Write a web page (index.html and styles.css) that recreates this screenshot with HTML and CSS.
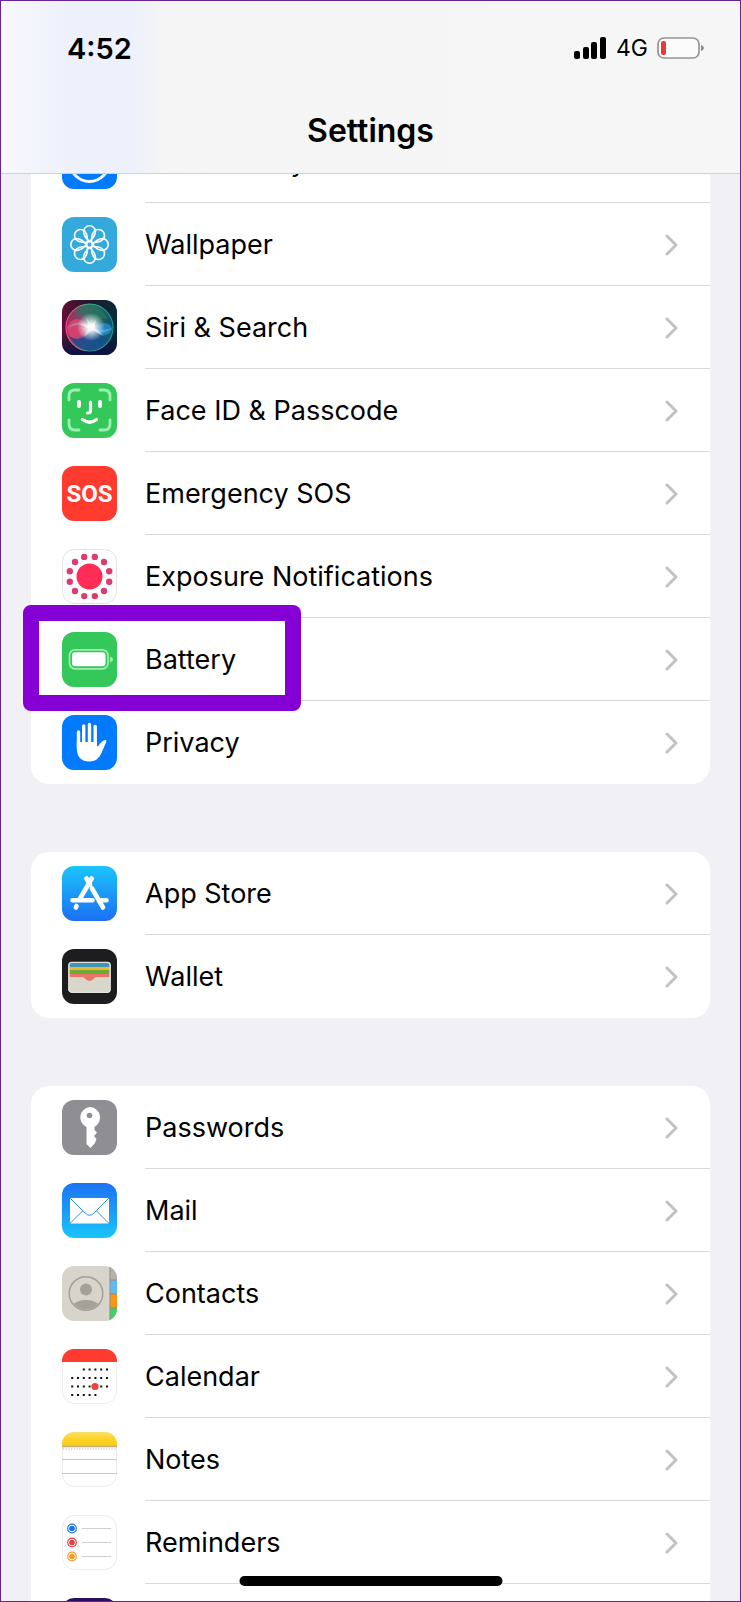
FILE: index.html
```
<!DOCTYPE html>
<html lang="en">
<head>
  <meta charset="UTF-8" />
  <meta name="viewport" content="width=device-width, initial-scale=1.0"/>
  <title>Settings</title>
  <link rel="stylesheet" href="styles.css">
</head>
<body>
  <svg class="defs" aria-hidden="true">
    <symbol id="chevron" viewBox="0 0 14 22">
      <path d="M2 2l9 9-9 9" fill="none" stroke="#c2c2c5" stroke-width="3" stroke-linecap="round" stroke-linejoin="round"/>
    </symbol>
  </svg>

  <div class="screen">
    <header class="header">
      <div class="status-bar">
        <span class="time">4:52</span>
        <div class="status-icons">
          <svg width="34" height="22" viewBox="0 0 34 22" aria-hidden="true">
            <rect x="1" y="14" width="6" height="8" rx="2"/>
            <rect x="10" y="10" width="6" height="12" rx="2"/>
            <rect x="18" y="5" width="6" height="17" rx="2"/>
            <rect x="27" y="0" width="6" height="22" rx="2"/>
          </svg>
          <span class="network">4G</span>
          <svg width="48" height="22" viewBox="0 0 48 22" aria-hidden="true">
            <rect x="1" y="1" width="41" height="20" rx="6" fill="#fbfbfb" stroke="#949694" stroke-width="1.7"/>
            <rect x="4" y="4" width="5" height="14" rx="2" fill="#e8393c"/>
            <path d="M44 8q3 .8 3 3t-3 3z" fill="#8b8b8b"/>
          </svg>
        </div>
      </div>
      <h1 class="title">Settings</h1>
    </header>

    <main class="content">
      <nav class="group">
        <a class="row" href="#">
          <svg class="icon" viewBox="0 0 55 55"><rect width="55" height="55" rx="12" fill="#007aff"/><circle cx="27.5" cy="28" r="19.5" fill="none" stroke="#fff" stroke-width="3"/></svg>
          <span class="label">Accessibility</span>
          <svg class="chevron"><use href="#chevron"/></svg>
        </a>
        <a class="row" href="#">
          <svg class="icon" viewBox="0 0 55 55">
            <rect width="55" height="55" rx="12" fill="#34aadc"/>
            <g fill="none" stroke="#fff" stroke-width="1.6">
              <circle cx="27.5" cy="27.5" r="3"/>
              <path id="petal" d="M27.500 24.500C23.500 21 21.600 17.500 21.600 14.500A5.900 5.700 0 0 1 33.400 14.500C33.400 17.500 31.500 21 27.500 24.500Z"/>
              <use href="#petal" transform="rotate(45 27.500 27.500)"/>
              <use href="#petal" transform="rotate(90 27.500 27.500)"/>
              <use href="#petal" transform="rotate(135 27.500 27.500)"/>
              <use href="#petal" transform="rotate(180 27.500 27.500)"/>
              <use href="#petal" transform="rotate(225 27.500 27.500)"/>
              <use href="#petal" transform="rotate(270 27.500 27.500)"/>
              <use href="#petal" transform="rotate(315 27.500 27.500)"/>
            </g>
          </svg>
          <span class="label">Wallpaper</span>
          <svg class="chevron"><use href="#chevron"/></svg>
        </a>
        <a class="row" href="#">
          <svg class="icon" viewBox="0 0 55 55">
            <defs>
              <linearGradient id="siriBg"><stop offset="0" stop-color="#641035"/><stop offset=".45" stop-color="#25152f"/><stop offset="1" stop-color="#062d35"/></linearGradient>
              <linearGradient id="siriShade" x2="0" y2="1"><stop offset=".55" stop-color="#10133f" stop-opacity="0"/><stop offset="1" stop-color="#0c1048"/></linearGradient>
              <linearGradient id="siriOrb"><stop offset="0" stop-color="#a52a58"/><stop offset=".4" stop-color="#66576f"/><stop offset=".65" stop-color="#216b69"/><stop offset="1" stop-color="#0d5263"/></linearGradient>
              <linearGradient id="siriRing"><stop offset="0" stop-color="#ef4c7f"/><stop offset=".5" stop-color="#35b487"/><stop offset="1" stop-color="#168f9d"/></linearGradient>
              <radialGradient id="siriGlow"><stop offset="0" stop-color="#fff"/><stop offset=".25" stop-color="#fff" stop-opacity=".9"/><stop offset="1" stop-color="#fff" stop-opacity="0"/></radialGradient>
            </defs>
            <rect width="55" height="55" rx="12" fill="url(#siriBg)"/>
            <rect width="55" height="55" rx="12" fill="url(#siriShade)"/>
            <circle cx="27.5" cy="27.500" r="23.500" fill="url(#siriOrb)" stroke="url(#siriRing)" stroke-width="1.200"/>
            <path d="M8 37Q24 37 29 27Q35 36 47 38Q40 51 27 51Q15 49 8 37Z" fill="#174b93" opacity=".8"/>
            <path d="M12 14Q25 12 29 27Q34 18 46 18Q37 5 27 5Q18 5 12 14Z" fill="#27755c" opacity=".7"/>
            <circle cx="15" cy="29" r="10" fill="#ea4475" opacity=".75"/>
            <ellipse cx="42" cy="29" rx="8" ry="6" fill="#278ddd" opacity=".75"/>
            <path d="M5 28Q21 22 29 27T50 28Q39 38 29 27T5 28Z" fill="#a9dfe4" opacity=".3"/>
            <circle cx="29" cy="27" r="14" fill="url(#siriGlow)"/>
            <path d="M24 17l5 8 5-5-2 7 10 9-12-6-8 7 4-9-9-4 10 1z" fill="#fff" opacity=".5"/>
          </svg>
          <span class="label">Siri &amp; Search</span>
          <svg class="chevron"><use href="#chevron"/></svg>
        </a>
        <a class="row" href="#">
          <svg class="icon" viewBox="0 0 55 55">
            <rect width="55" height="55" rx="12" fill="#34c759"/>
            <path d="M7 17v-4q0-6 6-6h4M38 7h4q6 0 6 6v4M48 37v4q0 6-6 6h-4M17 47h-4q-6 0-6-6v-4" fill="none" stroke="#9cf0ae" stroke-width="2.8" stroke-linecap="round"/>
            <path d="M17 19v4M38 19v4" stroke="#fff" stroke-width="4" stroke-linecap="round"/>
            <path d="M28.500 19v9q0 2-3 2M20.500 36.500q7 5.500 14 0" fill="none" stroke="#fff" stroke-width="3.200" stroke-linecap="round"/>
          </svg>
          <span class="label">Face ID &amp; Passcode</span>
          <svg class="chevron"><use href="#chevron"/></svg>
        </a>
        <a class="row" href="#">
          <svg class="icon" viewBox="0 0 55 55">
            <rect width="55" height="55" rx="12" fill="#ff3b30"/>
            <text class="sos" x="27.500" y="36" text-anchor="middle">SOS</text>
          </svg>
          <span class="label">Emergency SOS</span>
          <svg class="chevron"><use href="#chevron"/></svg>
        </a>
        <a class="row" href="#">
          <svg class="icon" viewBox="0 0 55 55">
            <rect x=".5" y=".5" width="54" height="54" rx="12" fill="#fff" stroke="#e3e3e5"/>
            <circle cx="27.500" cy="27.500" r="13" fill="#ff2d55"/>
            <g fill="#dd3c70">
              <circle cx="22.200" cy="7.900" r="3.200"/><circle cx="32.800" cy="7.900" r="3.200"/>
              <circle cx="42" cy="13" r="3.200"/><circle cx="47.200" cy="22.200" r="3.200"/>
              <circle cx="47.200" cy="32.800" r="3.200"/><circle cx="42" cy="42" r="3.200"/>
              <circle cx="32.800" cy="47.100" r="3.200"/><circle cx="22.200" cy="47.100" r="3.200"/>
              <circle cx="13" cy="42" r="3.200"/><circle cx="7.800" cy="32.800" r="3.200"/>
              <circle cx="7.800" cy="22.200" r="3.200"/><circle cx="13" cy="13" r="3.200"/>
            </g>
          </svg>
          <span class="label">Exposure Notifications</span>
          <svg class="chevron"><use href="#chevron"/></svg>
        </a>
        <a class="row highlighted" href="#">
          <svg class="icon" viewBox="0 0 55 55">
            <rect width="55" height="55" rx="12" fill="#34c759"/>
            <rect x="7.500" y="17.800" width="38.500" height="19" rx="5.500" fill="none" stroke="#9df0ad" stroke-width="1.700"/>
            <rect x="10" y="20.300" width="33.500" height="14" rx="3" fill="#fff"/>
            <path d="M48 24.500q3 .8 3 3t-3 3z" fill="#9df0ad"/>
          </svg>
          <span class="label">Battery</span>
          <svg class="chevron"><use href="#chevron"/></svg>
        </a>
        <a class="row" href="#">
          <svg class="icon" viewBox="0 0 55 55">
            <rect width="55" height="55" rx="12" fill="#007aff"/>
            <path d="M16.500 33V17M21.700 28V11M27.500 27V9.500M33.200 28V11.500" fill="none" stroke="#fff" stroke-width="3.400" stroke-linecap="round"/>
            <path d="M14.800 27H35V31Q36 32 38 28.500Q41 24.500 44 25Q45 25.500 44 27.500L39 39Q35.500 46.500 27.500 46.500Q14.800 46.500 14.800 33Z" fill="#fff"/>
          </svg>
          <span class="label">Privacy</span>
          <svg class="chevron"><use href="#chevron"/></svg>
        </a>
      </nav>

      <nav class="group">
        <a class="row" href="#">
          <svg class="icon" viewBox="0 0 55 55">
            <defs><linearGradient id="storeBg" x2="0" y2="1"><stop stop-color="#1bc5fb"/><stop offset="1" stop-color="#1b6ff3"/></linearGradient></defs>
            <rect width="55" height="55" rx="12" fill="url(#storeBg)"/>
            <g fill="none" stroke="#fff" stroke-width="4.600" stroke-linecap="round">
              <path d="M29.700 12.500L17.800 33M10.500 34.300H30.500M14.500 40L13.800 41.500M24.500 12.500L28 18.500M30 22.500L41 41.500M38.500 34.300H44.500"/>
            </g>
          </svg>
          <span class="label">App Store</span>
          <svg class="chevron"><use href="#chevron"/></svg>
        </a>
        <a class="row" href="#">
          <svg class="icon" viewBox="0 0 55 55">
            <defs><clipPath id="walletClip"><rect x="6.500" y="13" width="42" height="30.500" rx="3"/></clipPath></defs>
            <rect width="55" height="55" rx="12" fill="#1d1d1f"/>
            <g clip-path="url(#walletClip)">
              <rect x="6" y="12" width="43" height="32" fill="#d9d6cc"/>
              <rect x="7.500" y="14" width="40" height="5" fill="#4093b8"/>
              <rect x="7.500" y="18" width="40" height="4" fill="#f4b52c"/>
              <rect x="7.500" y="21" width="40" height="4" fill="#6dab38"/>
              <path d="M7.500 25h40v3H35q-2 0-3.500 2-4 4-8 0-1.500-2-3.500-2H7.500z" fill="#ee7467"/>
            </g>
            <rect x="6.800" y="13.300" width="41.400" height="30" rx="3" fill="none" stroke="#e5e4de" stroke-width="1.200"/>
          </svg>
          <span class="label">Wallet</span>
          <svg class="chevron"><use href="#chevron"/></svg>
        </a>
      </nav>

      <nav class="group">
        <a class="row" href="#">
          <svg class="icon" viewBox="0 0 55 55">
            <rect width="55" height="55" rx="12" fill="#8e8e93"/>
            <path d="M27.500 7a10.500 10.500 0 0 1 5 19.800V30l2.500 2.500-3 3.500 2.500 3-1.500 4-4.500 5-4-4V27A10.500 10.500 0 0 1 27.500 7Z" fill="#fff"/>
            <circle cx="27.500" cy="15.500" r="2.800" fill="#8e8e93"/>
          </svg>
          <span class="label">Passwords</span>
          <svg class="chevron"><use href="#chevron"/></svg>
        </a>
        <a class="row" href="#">
          <svg class="icon" viewBox="0 0 55 55">
            <defs><linearGradient id="mailBg" x2="0" y2="1"><stop stop-color="#1d72f3"/><stop offset="1" stop-color="#19c5fb"/></linearGradient></defs>
            <rect width="55" height="55" rx="12" fill="url(#mailBg)"/>
            <rect x="8" y="15" width="39" height="25.500" rx="1.500" fill="#fff"/>
            <path d="M8.500 15.500L23.500 30.500q4 3.500 8 0L46.500 15.500M8.500 40L20.500 28M46.500 40L34.500 28" fill="none" stroke="#3a8fd8" stroke-width="1"/>
          </svg>
          <span class="label">Mail</span>
          <svg class="chevron"><use href="#chevron"/></svg>
        </a>
        <a class="row" href="#">
          <svg class="icon" viewBox="0 0 55 55">
            <defs>
              <clipPath id="contactsClip"><rect width="55" height="55" rx="12"/></clipPath>
              <clipPath id="personClip"><circle cx="24" cy="27.500" r="16"/></clipPath>
            </defs>
            <g clip-path="url(#contactsClip)">
              <rect width="55" height="55" fill="#d6d4cb"/>
              <rect x="48" width="7" height="14" fill="#b8b2a8"/>
              <rect x="48" y="14" width="7" height="14" fill="#5dbdf0"/>
              <rect x="48" y="28" width="7" height="14" fill="#fd9510"/>
              <rect x="48" y="42" width="7" height="13" fill="#45cf68"/>
              <path d="M48 0v55M48 14h7M48 28h7M48 42h7" stroke="#8d8c83" stroke-width="1"/>
              <g clip-path="url(#personClip)" fill="#a5a098">
                <circle cx="24" cy="23.500" r="6"/>
                <ellipse cx="24" cy="42" rx="14" ry="8"/>
              </g>
              <circle cx="24" cy="27.500" r="16.800" fill="none" stroke="#a5a098" stroke-width="1.500"/>
            </g>
          </svg>
          <span class="label">Contacts</span>
          <svg class="chevron"><use href="#chevron"/></svg>
        </a>
        <a class="row" href="#">
          <svg class="icon" viewBox="0 0 55 55">
            <rect x=".5" y=".5" width="54" height="54" rx="12" fill="#fff" stroke="#ececee"/>
            <path d="M0 13V12A12 12 0 0 1 12 0H43A12 12 0 0 1 55 12V13Z" fill="#ff3b30"/>
            <g stroke="#111" stroke-width="2" stroke-dasharray="2 3.800">
              <path d="M20.800 20.500H46"/>
              <path d="M9.200 29H46"/>
              <path d="M9.200 37.500H46"/>
              <path d="M9.200 46H34.500"/>
            </g>
            <circle cx="33" cy="37.500" r="3.600" fill="#f0413d"/>
          </svg>
          <span class="label">Calendar</span>
          <svg class="chevron"><use href="#chevron"/></svg>
        </a>
        <a class="row" href="#">
          <svg class="icon" viewBox="0 0 55 55">
            <defs><linearGradient id="notesBg" x2="0" y2="1"><stop stop-color="#fae06a"/><stop offset=".5" stop-color="#fcd325"/><stop offset="1" stop-color="#f8cc16"/></linearGradient></defs>
            <rect x=".5" y=".5" width="54" height="54" rx="12" fill="#fff" stroke="#ececee"/>
            <path d="M0 14V12A12 12 0 0 1 12 0H43A12 12 0 0 1 55 12V14Z" fill="url(#notesBg)"/>
            <path d="M0 14.500H55" stroke="#c8ad72" stroke-width="1.500"/>
            <path d="M1 17H54" stroke="#b9b9b9" stroke-width="1.200" stroke-dasharray="1.200 1.500"/>
            <path d="M0 27.500H55M0 41.500H55" stroke="#c6c6c6" stroke-width="1"/>
          </svg>
          <span class="label">Notes</span>
          <svg class="chevron"><use href="#chevron"/></svg>
        </a>
        <a class="row" href="#">
          <svg class="icon" viewBox="0 0 55 55">
            <rect x=".5" y=".5" width="54" height="54" rx="12" fill="#fff" stroke="#ececee"/>
            <g fill="none" stroke-width="1.200">
              <circle cx="10" cy="13.500" r="4.300" stroke="#1a73e0"/>
              <circle cx="10" cy="27.500" r="4.300" stroke="#e9403d"/>
              <circle cx="10" cy="41.500" r="4.300" stroke="#f09a23"/>
              <path d="M20 13.500H49M20 27.500H49M20 41.500H49" stroke="#cfcfcf" stroke-width="1"/>
            </g>
            <circle cx="10" cy="13.500" r="2.800" fill="#1a73e0"/>
            <circle cx="10" cy="27.500" r="2.800" fill="#e9403d"/>
            <circle cx="10" cy="41.500" r="2.800" fill="#f09a23"/>
          </svg>
          <span class="label">Reminders</span>
          <svg class="chevron"><use href="#chevron"/></svg>
        </a>
        <a class="row" href="#" aria-label="Voice Memos">
          <svg class="icon" viewBox="0 0 55 55"><rect width="55" height="55" rx="12" fill="#27105c"/></svg>
        </a>
      </nav>
    </main>

    <div class="home-bar"></div>
  </div>
</body>
</html>
```

FILE: styles.css
```
*, *::after {
  box-sizing: border-box;
}

body {
  margin: 0;
  font-family: Inter, "Liberation Sans", sans-serif;
  background-color: #f0f0f5;
  color: #000;
}

.defs {
  display: none;
}

.screen {
  position: relative;
  height: 100vh;
  overflow: hidden;
  border: 1px solid #6b2390;
}

.header {
  position: relative;
  z-index: 2;
  padding-bottom: 22px;
  background: linear-gradient(90deg, #f8f8fd 0, #edf1fc 72px, #edf1fb 130px, #f5f5f6 165px, #f6f6f6 100%);
  border-bottom: 1px solid #d0d0d4;
}

.status-bar {
  display: flex;
  align-items: center;
  justify-content: space-between;
  height: 94px;
  padding: 0 35px 0 66px;
}

.time {
  font-size: 29px;
  font-weight: 600;
}

.status-icons {
  display: flex;
  align-items: center;
  gap: 9px;
}

.network {
  font-size: 23px;
}

.title {
  margin: 16px 0 0;
  font-size: 32px;
  line-height: 40px;
  font-weight: 600;
  text-align: center;
}

/* list is scrolled a little way under the header */
.content {
  margin-top: -54px;
  padding: 0 30px;
}

.group {
  margin-bottom: 68px;
  background-color: #fff;
  border-radius: 18px;
}

.row {
  position: relative;
  display: flex;
  align-items: center;
  gap: 28px;
  height: 83px;
  padding-left: 31px;
  color: #000;
  text-decoration: none;
}

.icon {
  flex: none;
  width: 55px;
  height: 55px;
}

.label {
  flex: 1;
  align-self: stretch;
  display: flex;
  align-items: center;
  font-size: 27px;
  border-bottom: 1px solid #d9d9dc;
}

.chevron {
  position: absolute;
  right: 31px;
  width: 14px;
  height: 22px;
}

.row:last-child .label {
  border-bottom: none;
}

.sos {
  font-family: Roboto, "Liberation Sans", sans-serif;
  font-size: 24px;
  font-weight: bold;
  fill: #fff;
}

.highlighted::after {
  content: "";
  position: absolute;
  top: -13px;
  bottom: -10px;
  left: -8px;
  z-index: 1;
  width: 278px;
  border: 16px solid #8500d4;
  border-radius: 8px;
}

.home-bar {
  position: absolute;
  bottom: 15px;
  left: 50%;
  z-index: 3;
  width: 263px;
  height: 10px;
  border-radius: 5px;
  background-color: #000;
  transform: translateX(-50%);
}
```
